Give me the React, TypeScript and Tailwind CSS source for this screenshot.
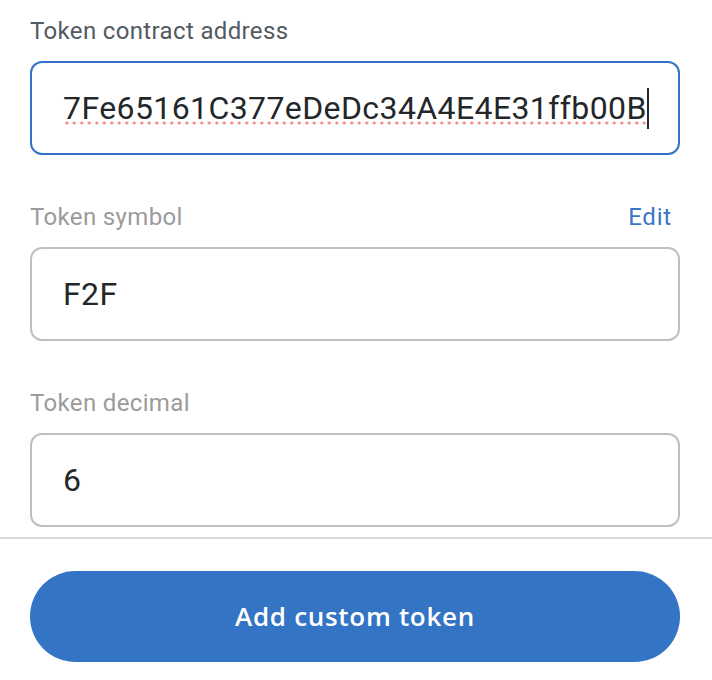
export default function App() {
  return (
    <div className="flex h-[680px] w-[712px] flex-col overflow-hidden bg-white font-['Roboto',sans-serif]">
      <div className="flex flex-col pl-[30px] pr-[32px] pt-[17px]">
        <div className="h-[28px] text-[24px] leading-[28px] tracking-[0.35px] text-[#535a61]">
          Token contract address
        </div>
        <div className="mt-[16px] flex h-[94px] items-center overflow-hidden rounded-[12px] border-2 border-[#3473c3] pl-[31px]">
          {/* spellcheck dots under the pasted address */}
          <span className="whitespace-nowrap bg-[radial-gradient(circle,#ef8276_1.3px,transparent_1.7px)] bg-[length:7.5px_4px] bg-[position:0_33px] bg-repeat-x text-[32px] leading-[40px] tracking-[0.4px] text-[#24272a]">
            7Fe65161C377eDeDc34A4E4E31ffb00B
          </span>
          <span className="h-[41px] w-[2px] bg-[#24272a]" />
        </div>

        <div className="mt-[48px] flex h-[28px] items-center justify-between text-[24px] leading-[28px] tracking-[0.35px]">
          <span className="text-[#9b9b9b]">Token symbol</span>
          <span className="mr-[8px] text-[24px] tracking-[0.8px] text-[#3a77c6]">Edit</span>
        </div>
        <div className="mt-[16px] flex h-[94px] items-center rounded-[12px] border-2 border-[#bbc0c5] pl-[31px]">
          <span className="text-[32px] leading-[40px] tracking-[0.4px] text-[#24272a]">F2F</span>
        </div>

        <div className="mt-[48px] h-[28px] text-[24px] leading-[28px] tracking-[0.35px] text-[#9b9b9b]">
          Token decimal
        </div>
        <div className="mt-[16px] flex h-[94px] items-center rounded-[12px] border-2 border-[#bbc0c5] pl-[31px]">
          <span className="text-[32px] leading-[40px] text-[#24272a]">6</span>
        </div>
      </div>

      <div className="mt-[10px] h-[2px] w-full bg-[#d6d9dc]" />

      <div className="pl-[30px] pr-[32px] pt-[32px]">
        <button className="flex h-[91px] w-full items-center justify-center rounded-full bg-[#3474c4] font-['Open_Sans',sans-serif] text-[26px] font-semibold tracking-[0.7px] text-white">
          Add custom token
        </button>
      </div>
    </div>
  )
}
